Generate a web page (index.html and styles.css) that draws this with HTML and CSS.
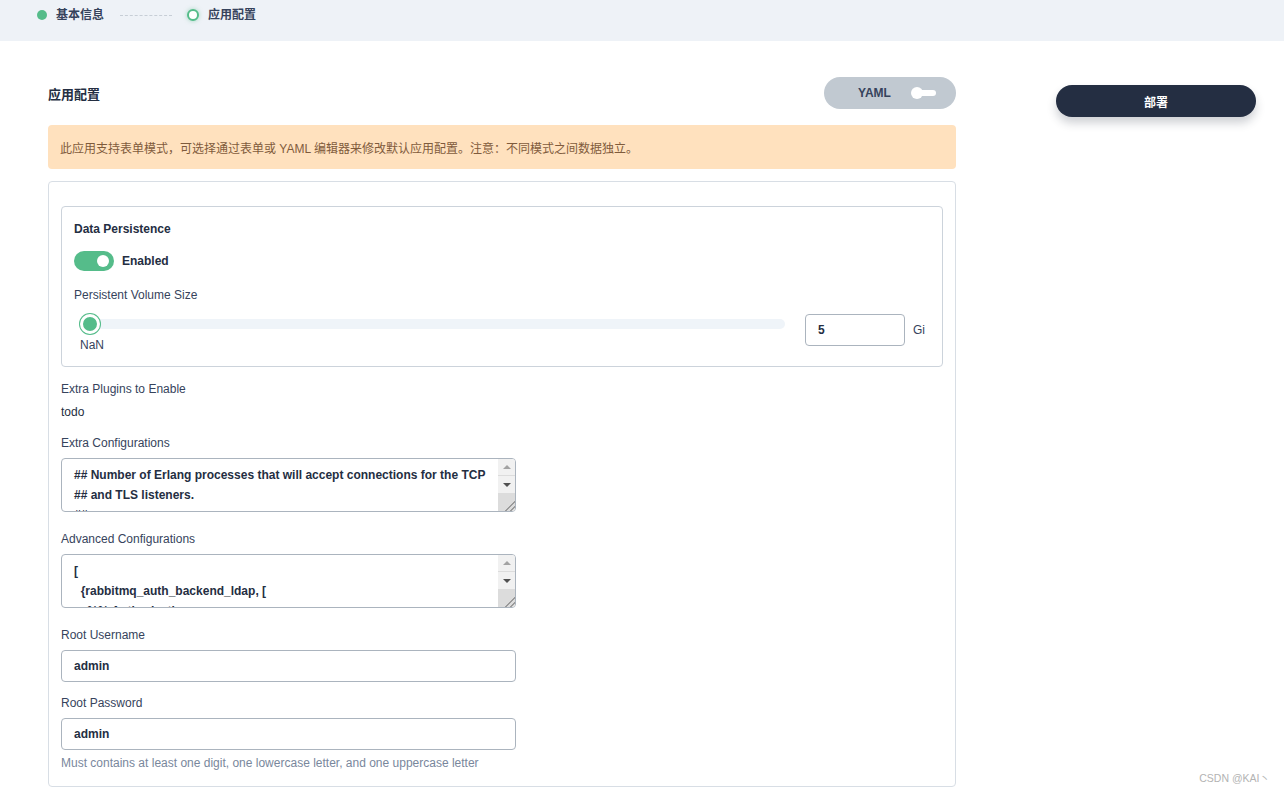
FILE: index.html
```html
<!DOCTYPE html>
<html lang="zh-CN">
<head>
<meta charset="utf-8">
<title>应用配置</title>
<link rel="stylesheet" href="styles.css">
</head>
<body>
<div class="steps-bar">
  <div class="step done"><span class="dot"></span><span class="step-text">基本信息</span></div>
  <span class="step-line"></span>
  <div class="step current"><span class="ring"></span><span class="step-text">应用配置</span></div>
</div>

<div class="page">
  <div class="main-col">
    <div class="head-row">
      <h2 class="title">应用配置</h2>
      <div class="yaml-switch">
        <span class="yaml-text">YAML</span>
        <span class="mini-toggle"><span class="mini-knob"></span></span>
      </div>
    </div>

    <div class="alert">此应用支持表单模式，可选择通过表单或 YAML 编辑器来修改默认应用配置。注意：不同模式之间数据独立。</div>

    <div class="form-card">
      <div class="group-box">
        <div class="group-title">Data Persistence</div>
        <div class="switch-row">
          <span class="toggle"><span class="knob"></span></span>
          <span class="switch-label">Enabled</span>
        </div>
        <div class="label">Persistent Volume Size</div>
        <div class="slider-row">
          <div class="slider-col">
            <div class="slider-track"><span class="thumb"></span></div>
            <div class="slider-value">NaN</div>
          </div>
          <div class="num-input">5</div>
          <span class="unit">Gi</span>
        </div>
      </div>

      <div class="field">
        <div class="label">Extra Plugins to Enable</div>
        <div class="plain-value">todo</div>
      </div>

      <div class="field field-area">
        <div class="label">Extra Configurations</div>
        <div class="code-box">
          <div class="code-text">## Number of Erlang processes that will accept connections for the TCP
## and TLS listeners.
##</div>
          <div class="fake-scroll">
            <span class="sb-btn up"></span>
            <span class="sb-btn down"></span>
            <span class="sb-corner"></span>
          </div>
        </div>
      </div>

      <div class="field field-area">
        <div class="label">Advanced Configurations</div>
        <div class="code-box">
          <div class="code-text">[
  {rabbitmq_auth_backend_ldap, [
    %% Authorisation</div>
          <div class="fake-scroll">
            <span class="sb-btn up"></span>
            <span class="sb-btn down"></span>
            <span class="sb-corner"></span>
          </div>
        </div>
      </div>

      <div class="field">
        <div class="label">Root Username</div>
        <div class="text-input">admin</div>
      </div>

      <div class="field last">
        <div class="label">Root Password</div>
        <div class="text-input">admin</div>
        <div class="hint">Must contains at least one digit, one lowercase letter, and one uppercase letter</div>
      </div>
    </div>
  </div>

  <div class="side-col">
    <button class="deploy-btn">部署</button>
  </div>
</div>

<div class="watermark">CSDN @KAI丶</div>
</body>
</html>
```

FILE: styles.css
```css
* { box-sizing: border-box; }
html, body { margin: 0; padding: 0; }
body {
  background: #fff;
  font-family: "Liberation Sans", Arial, "Noto Sans CJK SC", sans-serif;
  font-size: 12px;
  color: #36435c;
  width: 1284px;
  height: 792px;
  overflow: hidden;
  position: relative;
}

/* steps */
.steps-bar {
  height: 41px;
  background: #eef2f7;
  display: flex;
  align-items: flex-start;
  padding: 6px 0 0 37px;
}
.step { display: flex; align-items: center; height: 18px; }
.step-text { font-weight: 700; font-size: 12px; color: #36435c; line-height: 18px; }
.dot { width: 10px; height: 10px; border-radius: 50%; background: #55bc8a; margin-right: 9px; }
.ring {
  width: 12px; height: 12px; border-radius: 50%;
  border: 2px solid #55bc8a; background: #fff;
  box-shadow: 0 0 4px rgba(85,188,138,0.5);
  margin-right: 9px;
}
.step-line {
  width: 52px; height: 0; margin: 9px 15px 0 16px;
  border-top: 1px dashed #c7ced6;
}

/* page */
.page {
  display: flex;
  gap: 100px;
  padding: 36px 0 0 48px;
}
.main-col { width: 908px; }
.side-col { width: 200px; padding-top: 8px; }

.head-row {
  display: flex; align-items: center; justify-content: space-between;
  height: 32px;
}
.title {
  margin: 0; font-size: 13px; font-weight: 700; color: #242e42;
  padding-top: 1px;
}
.yaml-switch {
  width: 132px; height: 32px; border-radius: 16px;
  background: #c1c9d1;
  display: flex; align-items: center;
  padding-left: 34px;
}
.yaml-text { font-weight: 700; font-size: 12px; color: #36435c; }
.mini-toggle {
  position: relative;
  width: 24px; height: 6px; border-radius: 3px; background: #fff;
  margin-left: 21px;
  display: flex; align-items: center;
}
.mini-knob {
  width: 12px; height: 12px; border-radius: 50%; background: #fff;
  margin-left: -1px;
}

.deploy-btn {
  width: 200px; height: 32px; border: 0; border-radius: 16px;
  background: #242e42; color: #fff;
  font-family: "Liberation Sans", "Noto Sans CJK SC", sans-serif;
  font-size: 12px; font-weight: 700;
  box-shadow: 0 6px 10px rgba(36,46,66,0.22);
}

.alert {
  margin-top: 16px;
  height: 44px;
  background: #ffe1be;
  border-radius: 4px;
  padding: 0 12px;
  display: flex; align-items: center;
  color: #7f5b3c;
  font-size: 12px;
}

.form-card {
  margin-top: 12px;
  border: 1px solid #d8dee5;
  border-radius: 4px;
  padding: 24px 12px 14px 12px;
}

.group-box {
  border: 1px solid #ccd3db;
  border-radius: 4px;
  padding: 13px 12px 12px 12px;
}
.group-title { font-weight: 700; color: #242e42; line-height: 18px; }
.switch-row { display: flex; align-items: center; margin-top: 13px; height: 20px; }
.toggle {
  width: 40px; height: 20px; border-radius: 10px; background: #55bc8a;
  display: flex; align-items: center; justify-content: flex-end;
  padding-right: 5px;
}
.knob { width: 12px; height: 12px; border-radius: 50%; background: #fff; }
.switch-label { margin-left: 8px; font-weight: 700; color: #242e42; }

.label { line-height: 18px; color: #36435c; font-size: 12px; }
.group-box .label { margin-top: 15px; }

.slider-row { display: flex; align-items: flex-start; margin-top: 10px; }
.slider-col { flex: 1; margin-left: 6px; }
.slider-track {
  position: relative;
  height: 10px; margin-top: 5px; margin-bottom: 5px;
  background: #eff4f9; border-radius: 5px;
}
.thumb {
  position: absolute; left: 0; top: -5px;
  width: 20px; height: 20px; border-radius: 50%;
  background: #55bc8a;
  border: 3px solid #fff;
  box-shadow: 0 0 0 1px #55bc8a;
}
.slider-value { margin-top: 7px; line-height: 18px; color: #36435c; }
.num-input {
  width: 100px; height: 32px; margin-left: 20px;
  border: 1px solid #abb4be; border-radius: 4px;
  padding: 0 12px; line-height: 30px;
  font-weight: 700; color: #242e42;
}
.unit { margin-left: 8px; line-height: 32px; color: #36435c; width: 17px; }

.field { margin-top: 13px; }
.field-area { margin-top: 13px; }
.field-area + .field-area { margin-top: 18px; }
.field-area + .field:not(.field-area) { margin-top: 18px; }
.field .label + * { margin-top: 5px; }
.plain-value { line-height: 18px; color: #242e42; }
.field-area .label + .code-box { margin-top: 6px; }
.field:not(.field-area) .label + .text-input { margin-top: 6px; }
.field.last { margin-top: 12px; }

.code-box {
  position: relative;
  width: 455px; height: 54px;
  border: 1px solid #abb4be; border-radius: 4px;
  overflow: hidden;
  display: flex;
}
.code-text {
  flex: 1;
  padding: 6px 12px;
  white-space: pre;
  line-height: 20px;
  font-weight: 700; color: #242e42; font-size: 12px;
  overflow: hidden;
}
.fake-scroll {
  width: 17px; display: flex; flex-direction: column;
  background: #f1f1f1;
}
.sb-btn {
  height: 17px; display: flex; align-items: center; justify-content: center;
}
.sb-btn.up { border-bottom: 1px solid #dcdcdc; }
.sb-btn.up::before {
  content: ""; border-left: 4px solid transparent; border-right: 4px solid transparent;
  border-bottom: 4px solid #a3a3a3;
}
.sb-btn.down::before {
  content: ""; border-left: 4px solid transparent; border-right: 4px solid transparent;
  border-top: 4px solid #505050;
}
.sb-corner {
  flex: 1; background: #dcdcdc;
  background-image:
    linear-gradient(135deg, transparent 70%, #9a9a9a 70%, #9a9a9a 76%, transparent 76%),
    linear-gradient(135deg, transparent 84%, #9a9a9a 84%, #9a9a9a 90%, transparent 90%);
}

.text-input {
  width: 455px; height: 32px;
  border: 1px solid #abb4be; border-radius: 4px;
  padding: 0 12px; line-height: 30px;
  font-weight: 700; color: #242e42; font-size: 12px;
}
.hint { margin-top: 4px; line-height: 18px; color: #79879c; }

.watermark {
  position: absolute; right: 14px; bottom: 7px;
  font-size: 10.5px; color: #b3b3b3;
}
```
